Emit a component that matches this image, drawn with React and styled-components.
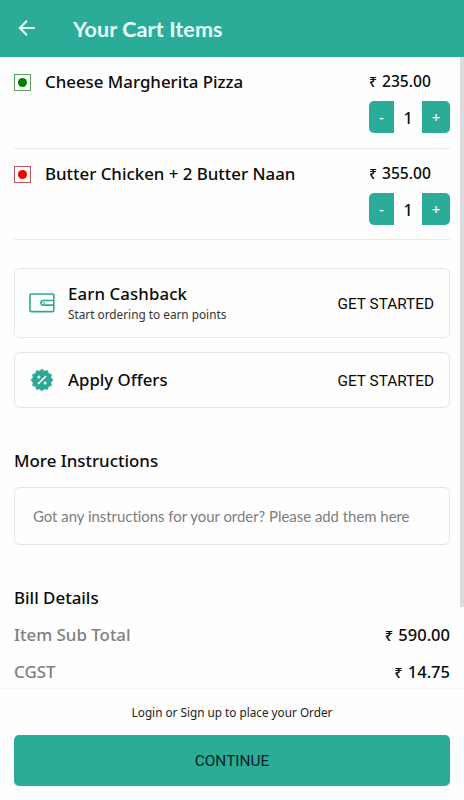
import React, { useState } from "react";
import styled, { createGlobalStyle } from "styled-components";

const cartItems = [
  { id: 1, name: "Cheese Margherita Pizza", price: 235, veg: true },
  { id: 2, name: "Butter Chicken + 2 Butter Naan", price: 355, veg: false },
];

const formatPrice = (value) => value.toFixed(2);

const BackIcon = () => (
  <svg width="18" height="18" viewBox="0 0 18 18" fill="none">
    <path
      d="M16.8 9H2M9 1.8L1.8 9l7.2 7.2"
      stroke="#e9fffb"
      strokeWidth="2"
      fill="none"
    />
  </svg>
);

const WalletIcon = () => (
  <svg width="26" height="20" viewBox="0 0 26 20" fill="none">
    <rect x="1" y="1" width="23.8" height="17.6" rx="1" stroke="#2aa995" strokeWidth="1.6" />
    <path
      d="M24.5 7.5H14.2a2.3 2.3 0 0 0 0 4.6h10.3"
      stroke="#2aa995"
      strokeWidth="1.6"
    />
    <path d="M14 9.8h2" stroke="#2aa995" strokeWidth="1.3" />
  </svg>
);

// 12 pointed badge
const badgePoints = Array.from({ length: 24 }, (_, i) => {
  const r = i % 2 === 0 ? 11.1 : 9.2;
  const a = (i * Math.PI) / 12;
  return `${12 + r * Math.sin(a)},${12 - r * Math.cos(a)}`;
}).join(" ");

const OfferIcon = () => (
  <svg width="24" height="24" viewBox="0 0 24 24">
    <polygon
      points={badgePoints}
      fill="#2aa995"
      stroke="#2aa995"
      strokeWidth="0.5"
      strokeLinejoin="round"
    />
    <path d="M8 16L16 8" stroke="#fff" strokeWidth="1.7" />
    <circle cx="8.9" cy="9" r="1.5" fill="#fff" />
    <circle cx="15.1" cy="15" r="1.5" fill="#fff" />
  </svg>
);

const CartItem = ({ name, price, veg }) => {
  const [count, setCount] = useState(1);

  return (
    <Item>
      <FoodMark $veg={veg} />
      <ItemName>{name}</ItemName>
      <ItemSide>
        <ItemPrice>
          <Rupee>₹</Rupee>
          {formatPrice(price * count)}
        </ItemPrice>
        <Stepper>
          <StepButton $side="left" onClick={() => setCount(Math.max(1, count - 1))}>
            -
          </StepButton>
          <Count>{count}</Count>
          <StepButton $side="right" onClick={() => setCount(count + 1)}>
            +
          </StepButton>
        </Stepper>
      </ItemSide>
    </Item>
  );
};

const App = () => {
  return (
    <Page>
      <GlobalStyle />
      <Header>
        <BackIcon />
        <Title>Your Cart Items</Title>
      </Header>
      <Content>
        {cartItems.map((item) => (
          <CartItem key={item.id} {...item} />
        ))}
        <Cards>
          <Card $height="70px">
            <IconBox>
              <WalletIcon />
            </IconBox>
            <CardText>
              <CardTitle $spacing="0.12px">Earn Cashback</CardTitle>
              <CardNote>Start ordering to earn points</CardNote>
            </CardText>
            <CardAction>GET STARTED</CardAction>
          </Card>
          <Card $height="56px">
            <IconBox>
              <OfferIcon />
            </IconBox>
            <CardText>
              <CardTitle>Apply Offers</CardTitle>
            </CardText>
            <CardAction>GET STARTED</CardAction>
          </Card>
        </Cards>
        <SectionTitle>More Instructions</SectionTitle>
        <Instructions placeholder="Got any instructions for your order? Please add them here" />
        <BillTitle>Bill Details</BillTitle>
        <BillRow>
          <BillLabel>Item Sub Total</BillLabel>
          <BillValue>
            <Rupee>₹</Rupee>
            {formatPrice(590)}
          </BillValue>
        </BillRow>
        <BillRow>
          <BillLabel>CGST</BillLabel>
          <BillValue>
            <Rupee>₹</Rupee>
            {formatPrice(14.75)}
          </BillValue>
        </BillRow>
        <ScrollThumb />
      </Content>
      <Footer>
        <FooterNote>Login or Sign up to place your Order</FooterNote>
        <Continue>CONTINUE</Continue>
      </Footer>
    </Page>
  );
};

const GlobalStyle = createGlobalStyle`
  * {
    box-sizing: border-box;
  }
  body {
    margin: 0;
    background: #fefefe;
    color: #0a0a0a;
    font-family: "Noto Sans", "Open Sans", sans-serif;
  }
  button, input {
    margin: 0;
    padding: 0;
    border: none;
    font-family: inherit;
  }
`;

const Page = styled.div`
  width: 464px;
  height: 800px;
  display: flex;
  flex-direction: column;
  overflow: hidden;
`;

const Header = styled.header`
  height: 57px;
  flex: none;
  display: flex;
  align-items: center;
  gap: 37px;
  padding: 0 0 1px 18px;
  background: #2aac98;
`;

const Title = styled.h1`
  margin: 1px 0 0;
  color: #e9fffb;
  font-family: Lato, sans-serif;
  font-size: 21.5px;
  line-height: 28px;
  font-weight: 700;
  letter-spacing: 0.1px;
`;

const Content = styled.main`
  position: relative;
  height: 631px;
  flex: none;
  overflow: hidden;
  padding: 0 14px;
`;

const Item = styled.section`
  height: 92px;
  display: flex;
  align-items: flex-start;
  border-bottom: 1px solid #e9e9e9;

  & + & {
    height: 91px;
  }
`;

const FoodMark = styled.span`
  width: 17px;
  height: 17px;
  flex: none;
  margin-top: 17px;
  display: flex;
  align-items: center;
  justify-content: center;
  border: 1px solid ${(props) => (props.$veg ? "#5f9f5f" : "#b9575c")};

  &::after {
    content: "";
    width: 9px;
    height: 9px;
    border-radius: 50%;
    background: ${(props) => (props.$veg ? "#008000" : "#f50000")};
  }
`;

const ItemName = styled.h2`
  flex: 1;
  margin: 13px 0 0 14px;
  font-size: 16.85px;
  line-height: 24px;
  font-weight: 500;
`;

const ItemSide = styled.div`
  width: 81px;
  flex: none;
`;

const Rupee = styled.span`
  margin-right: 5px;
  font-size: 0.9em;
  line-height: 1;
`;

const ItemPrice = styled.p`
  height: 24px;
  margin: 12px 0 0;
  font-size: 15.6px;
  line-height: 24px;
  font-weight: 500;
  white-space: nowrap;
`;

const Stepper = styled.div`
  height: 32px;
  margin-top: 8px;
  display: flex;
`;

const StepButton = styled.button`
  width: ${(props) => (props.$side === "left" ? "25px" : "28px")};
  background: #2aac98;
  color: #e9fffb;
  font-size: 15px;
  line-height: 32px;
  font-weight: 500;
  border-radius: ${(props) =>
    props.$side === "left" ? "5px 0 0 5px" : "0 5px 5px 0"};
`;

const Count = styled.span`
  flex: 1;
  text-align: center;
  font-size: 16px;
  line-height: 34px;
  font-weight: 500;
`;

const Cards = styled.div`
  display: grid;
  gap: 14px;
  margin-top: 28px;
`;

const Card = styled.section`
  height: ${(props) => props.$height};
  display: flex;
  align-items: center;
  padding: 0 15px 0 13px;
  border: 1px solid #e5e5e5;
  border-radius: 6px;
`;

const IconBox = styled.span`
  width: 27px;
  display: flex;
  justify-content: center;
`;

const CardText = styled.div`
  flex: 1;
  margin-left: 13px;
`;

const CardTitle = styled.h3`
  margin: 0;
  font-size: 16.8px;
  line-height: 22px;
  font-weight: 500;
  letter-spacing: ${(props) => props.$spacing || "normal"};
`;

const CardNote = styled.p`
  margin: 0;
  color: #333;
  font-size: 11.8px;
  line-height: 18px;
`;

const CardAction = styled.button`
  margin-top: 2px;
  background: none;
  color: #0a0a0a;
  && {
    font-family: Roboto, sans-serif;
  }
  font-size: 15.35px;
`;

const SectionTitle = styled.h2`
  margin: 41px 0 14px;
  font-size: 16.9px;
  line-height: 24px;
  font-weight: 500;
`;

const Instructions = styled.input`
  && {
    display: block;
    width: 100%;
    height: 58px;
    padding: 0 18px 1px;
    border: 1px solid #e5e5e5;
    border-radius: 6px;
    background: none;
    font-family: Lato, sans-serif;
    font-size: 14.9px;
    font-variant-ligatures: none;
  }

  &::placeholder {
    color: #7d7d7d;
  }
`;

const BillTitle = styled(SectionTitle)`
  margin: 41px 0 6px;
`;

const BillRow = styled.div`
  height: 37px;
  display: flex;
  justify-content: space-between;
  align-items: center;
  font-size: 16.9px;
  line-height: 24px;
  font-weight: 500;
`;

const BillLabel = styled.span`
  color: #808080;
`;

const BillValue = styled.span`
  font-size: 16.5px;
  white-space: nowrap;
`;

const ScrollThumb = styled.div`
  position: absolute;
  top: 0;
  right: 0;
  width: 4px;
  height: 550px;
  background: #dcdcdc;
`;

const Footer = styled.footer`
  flex: 1;
  padding: 0 14px;
  border-top: 1px solid #f5f5f5;
`;

const FooterNote = styled.p`
  margin: 14px 0;
  text-align: center;
  color: #222;
  font-size: 11.75px;
  line-height: 18px;
`;

const Continue = styled.button`
  width: 100%;
  height: 51px;
  border-radius: 5px;
  background: #2aac98;
  color: #08221e;
  && {
    font-family: Roboto, sans-serif;
  }
  font-size: 15.4px;
`;

export default App;
